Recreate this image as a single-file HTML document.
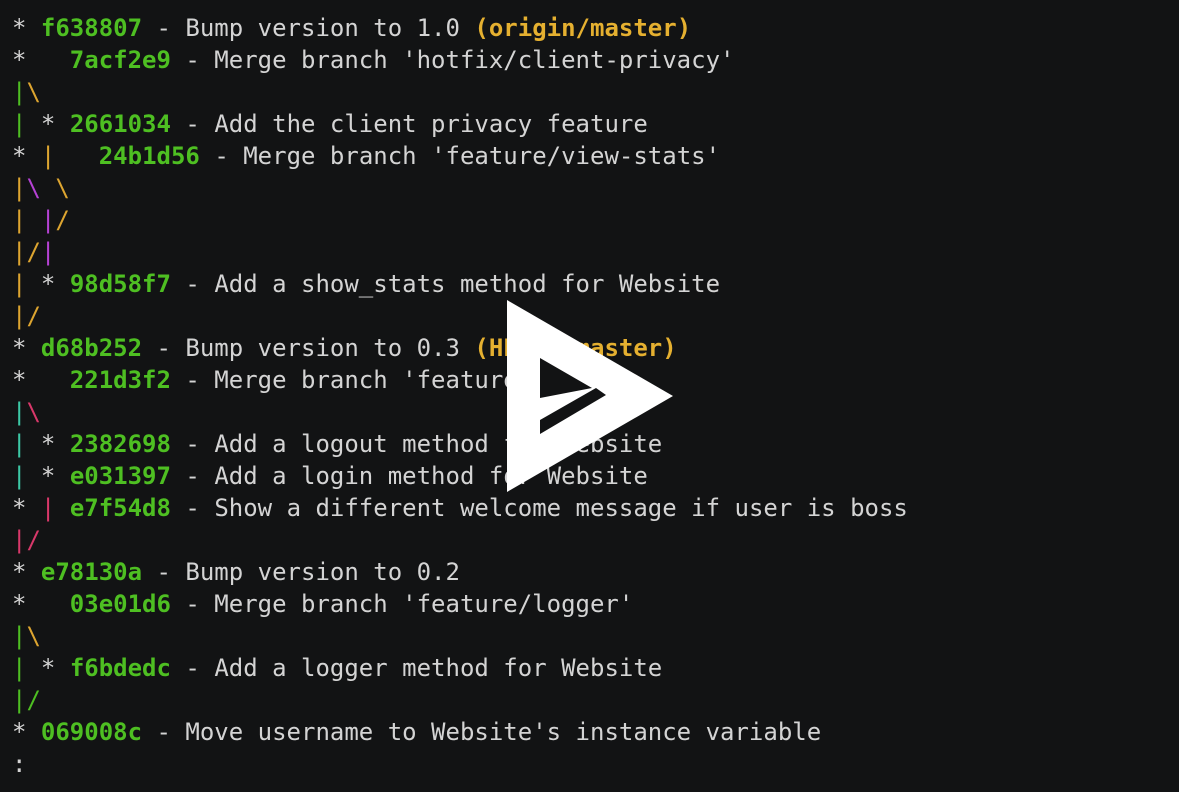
<!DOCTYPE html>
<html><head><meta charset="utf-8"><style>
html,body{margin:0;padding:0;background:#121314;width:1179px;height:792px;overflow:hidden}
pre{margin:0;position:absolute;left:12px;top:12px;font-family:"DejaVu Sans Mono","Liberation Mono",monospace;font-size:24px;line-height:32px;color:#d4d4d4}
.g{color:#4ebf22;font-weight:bold}.y{color:#e5b030;font-weight:bold}
.G{color:#4ebf22}.Y{color:#dda530}.P{color:#b542d4}.T{color:#3cc9a6}.R{color:#d8386a}
svg{position:absolute;left:0;top:0}
</style></head><body>
<pre>* <span class="g">f638807</span> - Bump version to 1.0 <span class="y">(origin/master)</span>
*   <span class="g">7acf2e9</span> - Merge branch 'hotfix/client-privacy'
<span class="G">|</span><span class="Y">\</span>
<span class="G">|</span> * <span class="g">2661034</span> - Add the client privacy feature
* <span class="Y">|</span>   <span class="g">24b1d56</span> - Merge branch 'feature/view-stats'
<span class="Y">|</span><span class="P">\</span> <span class="Y">\</span>
<span class="Y">|</span> <span class="P">|</span><span class="Y">/</span>
<span class="Y">|/</span><span class="P">|</span>
<span class="Y">|</span> * <span class="g">98d58f7</span> - Add a show_stats method for Website
<span class="Y">|/</span>
* <span class="g">d68b252</span> - Bump version to 0.3 <span class="y">(HEAD, master)</span>
*   <span class="g">221d3f2</span> - Merge branch 'feature/logout'
<span class="T">|</span><span class="R">\</span>
<span class="T">|</span> * <span class="g">2382698</span> - Add a logout method for Website
<span class="T">|</span> * <span class="g">e031397</span> - Add a login method for Website
* <span class="R">|</span> <span class="g">e7f54d8</span> - Show a different welcome message if user is boss
<span class="R">|/</span>
* <span class="g">e78130a</span> - Bump version to 0.2
*   <span class="g">03e01d6</span> - Merge branch 'feature/logger'
<span class="G">|</span><span class="Y">\</span>
<span class="G">|</span> * <span class="g">f6bdedc</span> - Add a logger method for Website
<span class="G">|/</span>
* <span class="g">069008c</span> - Move username to Website's instance variable
:</pre>
<svg width="1179" height="792"><path fill="#fff" d="M507 300 L673 396 L507 492 Z"/><path fill="#121314" d="M540 358 L592 388 L540 398 Z M540 420 L596 388 L606 395 L540 434 Z"/></svg>
</body></html>
